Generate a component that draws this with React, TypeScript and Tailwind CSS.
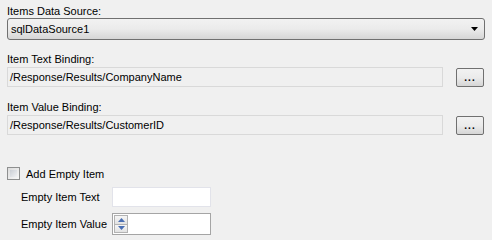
export default function App() {
	return (
		<div className="w-[492px] h-[240px] bg-[#f0f0f0] px-[7px] pt-[4px] text-[11px] text-black font-['Liberation_Sans',Arial,sans-serif] leading-[14px]">
			<div className="h-[14px]">Items Data Source:</div>
			<div className="h-[22px] flex items-center justify-between rounded-[3px] border border-[#707070] bg-gradient-to-b from-[#f2f2f2] via-[#ebebeb] to-[#d6d6d6] pl-[3px] pr-[4px]">
				<span>sqlDataSource1</span>
				<svg width="8" height="5" viewBox="0 0 8 5" className="mr-[1px]">
					<path d="M0 0 H7 L3.5 4 Z" fill="#000" />
				</svg>
			</div>

			<div className="h-[14px] mt-[12px]">Item Text Binding:</div>
			<BindingRow value="/Response/Results/CompanyName" />

			<div className="h-[14px] mt-[13px]">Item Value Binding:</div>
			<BindingRow value="/Response/Results/CustomerID" />

			<div className="mt-[32px] flex items-center h-[13px]">
				<span className="w-[13px] h-[13px] border border-[#8e8f8f] bg-gradient-to-br from-[#dcdcdc] to-[#f8f8f8] p-[2px]">
					<span className="block w-full h-full bg-gradient-to-br from-[#cbcfd5] to-[#f1f2f4]" />
				</span>
				<span className="ml-[6px]">Add Empty Item</span>
			</div>

			<div className="mt-[7px] pl-[14px] flex items-center">
				<span className="w-[91px] shrink-0 whitespace-nowrap">Empty Item Text</span>
				<div className="w-[99px] h-[20px] bg-white border border-[#e2e3ea]" />
			</div>

			<div className="mt-[6px] pl-[14px] flex items-center">
				<span className="w-[91px] shrink-0 whitespace-nowrap">Empty Item Value</span>
				<div className="w-[99px] h-[22px] bg-white border border-[#a5a5a5] flex p-[1px]">
					<div className="w-[14px] flex flex-col border border-[#b3b3b3]">
						<div className="flex-1 flex items-center justify-center bg-gradient-to-b from-[#f6f6f6] to-[#e2e2e2] border-b border-[#b3b3b3]">
							<svg width="7" height="4" viewBox="0 0 7 4">
								<path d="M0 4 L3.5 0 L7 4 Z" fill="#4a6fb3" />
							</svg>
						</div>
						<div className="flex-1 flex items-center justify-center bg-gradient-to-b from-[#f6f6f6] to-[#e2e2e2]">
							<svg width="7" height="4" viewBox="0 0 7 4">
								<path d="M0 0 L7 0 L3.5 4 Z" fill="#4a6fb3" />
							</svg>
						</div>
					</div>
				</div>
			</div>
		</div>
	);
}

function BindingRow({ value }: { value: string }) {
	return (
		<div className="mt-[1px] flex items-center">
			<div className="flex-1 h-[20px] border border-[#d9d9d9] bg-[#f0f0f0] pl-[2px] flex items-center">
				{value}
			</div>
			<button className="ml-[13px] mr-[1px] w-[28px] h-[19px] rounded-[2px] border border-[#707070] bg-gradient-to-b from-[#f2f2f2] via-[#ebebeb] to-[#d6d6d6] text-[10px] leading-[10px] flex items-end justify-center pb-[3px] font-bold tracking-[1px]">
				...
			</button>
		</div>
	);
}
